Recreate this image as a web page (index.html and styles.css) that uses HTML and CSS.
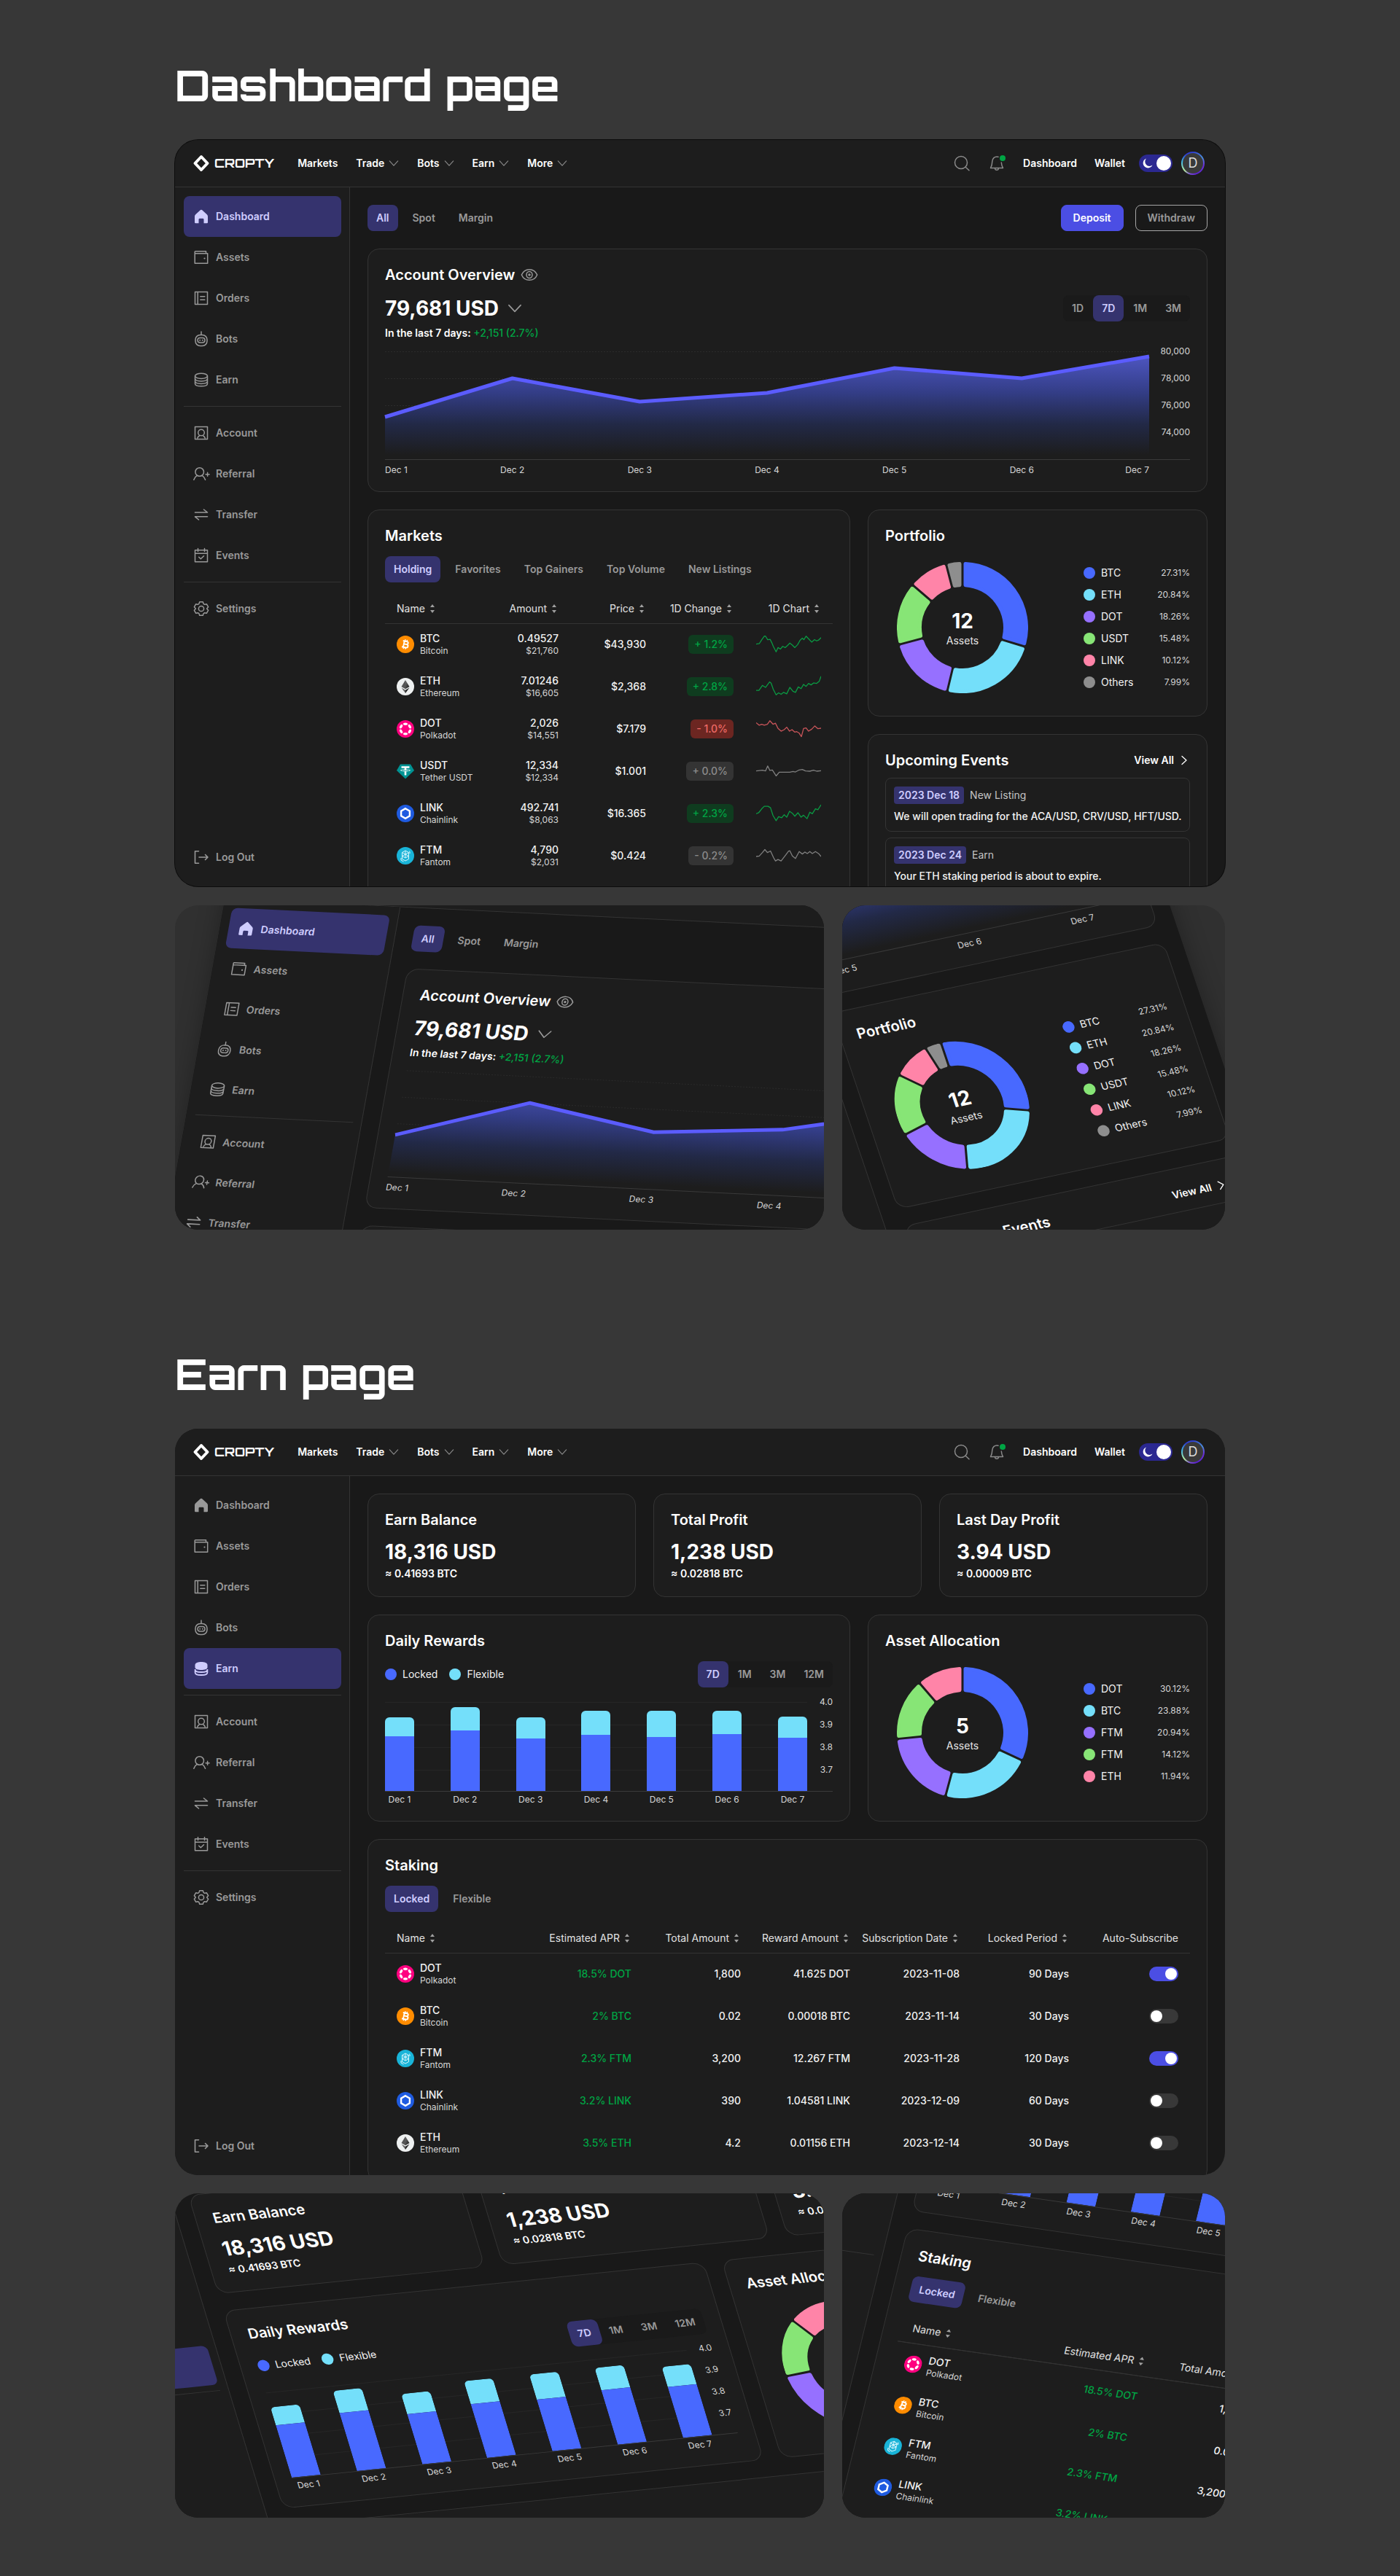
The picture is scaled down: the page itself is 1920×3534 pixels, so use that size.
FILE: index.html
```html
<!DOCTYPE html>
<html lang="en">
<head>
<meta charset="utf-8">
<meta name="viewport" content="width=device-width, initial-scale=1">
<title>Cropty</title>
<link rel="stylesheet" href="styles.css">
</head>
<body>
<svg class="sprite" aria-hidden="true">
  <defs>
    <linearGradient id="area-fill" gradientUnits="userSpaceOnUse" x1="0" y1="8" x2="0" y2="150">
      <stop offset="0" stop-color="#5159c8"/>
      <stop offset=".4" stop-color="#333d86"/>
      <stop offset=".7" stop-color="#222947"/>
      <stop offset="1" stop-color="#1d1d1d"/>
    </linearGradient>
    <linearGradient id="eth-fill" x1="0" y1="0" x2="1" y2="1">
      <stop offset="0" stop-color="#777"/><stop offset="1" stop-color="#111"/>
    </linearGradient>
  </defs>
  <symbol id="i-mark" viewBox="0 0 24 24"><path fill="none" stroke="#fff" stroke-width="4" stroke-linejoin="round" d="M12 3 20.500 12 12 21 3.500 12z"/></symbol>
  <symbol id="i-down" viewBox="0 0 16 16"><path fill="none" stroke="currentColor" stroke-width="1.300" stroke-linecap="round" stroke-linejoin="round" d="M1.500 4.500 8 11.500 14.500 4.500"/></symbol>
  <symbol id="i-right" viewBox="0 0 16 16"><path fill="none" stroke="currentColor" stroke-width="1.300" stroke-linecap="round" stroke-linejoin="round" d="M5 2.500 11 8 5 13.500"/></symbol>
  <symbol id="i-search" viewBox="0 0 24 24"><g fill="none" stroke="currentColor" stroke-width="1.500" stroke-linecap="round"><circle cx="11" cy="11" r="8.500"/><path d="m17.200 17.200 4.800 4.600"/></g></symbol>
  <symbol id="i-bell" viewBox="0 0 24 24"><g fill="none" stroke="currentColor" stroke-width="1.500" stroke-linecap="round" stroke-linejoin="round"><path d="M14 3.200C9 2 6 5.500 5.800 9.500 5.700 13 5.500 15 3.500 18.500h17c-1.500-2.500-2-4.500-2.200-7.500M9.500 19c.3 3 4.700 3 5 0"/></g></symbol>
  <symbol id="i-eye" viewBox="0 0 24 24"><g fill="none" stroke="currentColor" stroke-width="1.500"><path d="M1.300 12C5.500 2.200 18.500 2.200 22.700 12 18.500 21.800 5.500 21.800 1.300 12z"/><ellipse cx="12" cy="12" rx="4" ry="4.500"/><circle cx="12" cy="12" r="1"/></g></symbol>
  <symbol id="i-sort" viewBox="0 0 12 12"><path fill="currentColor" d="M6 0 9 4H3zM6 12 9 8H3z"/></symbol>
  <symbol id="i-moon" viewBox="0 0 14 14"><path fill="#fff" d="M5 .5A6.700 6.700 0 1 0 13.500 9.500 6.200 6.200 0 0 1 5 .5z"/></symbol>
  <symbol id="i-home" viewBox="0 0 24 24"><path fill="currentColor" d="M11 3.100a1.500 1.500 0 0 1 2 0l6.800 6.200q1.200 1 1.200 2.500V20q0 1.300-1.300 1.300h-4.200v-5.100q0-1.400-1.400-1.400H9.900q-1.400 0-1.400 1.400v5.100H4.300Q3 21.300 3 20v-8.200q0-1.500 1.200-2.500z"/></symbol>
  <symbol id="i-wallet" viewBox="0 0 24 24"><g fill="none" stroke="currentColor" stroke-width="1.500" stroke-linejoin="round"><path d="M3.200 6.800V4.500Q3.200 3.800 4 3.800h14.500v3M3.200 6.800h17.500v13.400H3.200z"/></g><circle cx="16.500" cy="13.500" r="1.100" fill="currentColor"/></symbol>
  <symbol id="i-orders" viewBox="0 0 24 24"><path fill="none" stroke="currentColor" stroke-width="1.500" stroke-linejoin="round" stroke-linecap="round" d="M3.500 3.500h17v17h-17zM7.200 3.500v17M10.800 9.800h6M10.800 14.200h6"/></symbol>
  <symbol id="i-bots" viewBox="0 0 24 24"><g fill="none" stroke="currentColor" stroke-width="1.500" stroke-linecap="round"><path d="M12 2v4"/><rect x="4" y="6.500" width="16" height="15" rx="6.500"/><rect x="7" y="10.500" width="10" height="6.500" rx="3.200"/></g><circle cx="10.200" cy="13.700" r="1" fill="currentColor"/><circle cx="13.800" cy="13.700" r="1" fill="currentColor"/></symbol>
  <symbol id="i-earn" viewBox="0 0 24 24"><g fill="none" stroke="currentColor" stroke-width="1.500"><ellipse cx="12" cy="6.800" rx="8.500" ry="3.600"/><path d="M3.500 6.800v10.400c0 4.800 17 4.800 17 0V6.800M3.500 10.300c0 4.800 17 4.800 17 0M3.500 13.800c0 4.800 17 4.800 17 0"/></g></symbol>
  <symbol id="i-earn-on" viewBox="0 0 24 24"><path fill="currentColor" d="M3.500 7c0-5.500 17-5.500 17 0v3.500c0 4.800-17 4.800-17 0z"/><path fill="none" stroke="currentColor" stroke-width="1.800" d="M3.600 13v4.400c0 4.800 16.800 4.800 16.800 0V13M3.600 13.400c0 4.800 16.800 4.800 16.800 0"/></symbol>
  <symbol id="i-account" viewBox="0 0 24 24"><g fill="none" stroke="currentColor" stroke-width="1.500" stroke-linejoin="round"><path d="M3.500 3.500h17v17h-17zM6.500 19.500q1.200-3.200 3.500-4M17.500 19.500q-1.200-3.200-3.500-4"/><circle cx="12" cy="11.500" r="4.300"/></g></symbol>
  <symbol id="i-referral" viewBox="0 0 24 24"><g fill="none" stroke="currentColor" stroke-width="1.500" stroke-linecap="round"><circle cx="9.700" cy="9.500" r="5.800"/><path d="M1.800 20.200q1-3.800 4.200-5.600M17.600 20.200q-1-3.800-4.200-5.600M20.600 10.200v5M18.100 12.700h5"/></g></symbol>
  <symbol id="i-transfer" viewBox="0 0 24 24"><path fill="none" stroke="currentColor" stroke-width="1.600" stroke-linecap="round" stroke-linejoin="round" d="M3.500 9h17L15.500 5M20.500 14.800h-17l5 4.200"/></symbol>
  <symbol id="i-events" viewBox="0 0 24 24"><path fill="none" stroke="currentColor" stroke-width="1.500" stroke-linecap="round" stroke-linejoin="round" d="M3.500 4.800h17v16h-17zM3.500 9.300h17M7.500 2.500v4M16.500 2.500v4M8.700 14.300l2.600 2.500 4.200-4"/></symbol>
  <symbol id="i-settings" viewBox="0 0 24 24"><g fill="none" stroke="currentColor" stroke-width="1.500" stroke-linejoin="round"><path d="M9.700 2.800h4.600l.8 2.600 1.600.9 2.600-.6 2.300 4-1.800 2v.6l1.800 2-2.300 4-2.600-.6-1.600.9-.8 2.600H9.700l-.8-2.600-1.600-.9-2.600.6-2.300-4 1.800-2v-.6l-1.800-2 2.300-4 2.600.6 1.600-.9z"/><circle cx="12" cy="12" r="3.600"/></g></symbol>
  <symbol id="i-logout" viewBox="0 0 24 24"><path fill="none" stroke="currentColor" stroke-width="1.600" stroke-linecap="round" stroke-linejoin="round" d="M8.500 3.800h-5v16.400h5M9 12h12M17.500 8.500 21 12l-3.500 3.500"/></symbol>
  <symbol id="c-btc" viewBox="0 0 24 24"><circle cx="12" cy="12" r="12" fill="#ff8c00"/><g fill="none" stroke="#fff" stroke-width="1.900" transform="rotate(12 12 12)"><path d="M7.800 7.800h5.400c2.800 0 2.800 4 0 4h-3M10 11.800h3.700c3 0 3 4.400 0 4.400H7.800M9.800 7.800v8.400"/><path stroke-width="1.500" d="M10.600 5.400v2M13.200 5.400v2M10.600 16.600v2M13.200 16.600v2"/></g></symbol>
  <symbol id="c-eth" viewBox="0 0 24 24"><circle cx="12" cy="12" r="12" fill="#eef0f0"/><path fill="#555" d="m12 3-5.500 9L12 15.300z"/><path fill="url(#eth-fill)" d="m12 3 5.500 9-5.500 3.300z"/><path fill="#666" d="M6.500 13.400 12 21v-4.300z"/><path fill="#222" d="M17.500 13.400 12 21v-4.300z"/></symbol>
  <symbol id="c-dot" viewBox="0 0 24 24"><circle cx="12" cy="12" r="12" fill="#ff0080"/><g fill="#fff"><ellipse cx="12" cy="5.200" rx="3" ry="1.700"/><ellipse cx="12" cy="18.800" rx="3" ry="1.700"/><ellipse cx="12" cy="5.200" rx="3" ry="1.700" transform="rotate(60 12 12)"/><ellipse cx="12" cy="5.200" rx="3" ry="1.700" transform="rotate(120 12 12)"/><ellipse cx="12" cy="5.200" rx="3" ry="1.700" transform="rotate(240 12 12)"/><ellipse cx="12" cy="5.200" rx="3" ry="1.700" transform="rotate(300 12 12)"/></g></symbol>
  <symbol id="c-usdt" viewBox="0 0 24 24"><path fill="#009393" d="M5 2.500h14l5 8.500L12 22.500 0 11z"/><path fill="#fff" d="M6.500 5.200h11v2.500h-4.200v1.500c3.200.2 5.600.8 5.600 1.600s-2.400 1.400-5.600 1.600v5h-2.600v-5c-3.200-.2-5.600-.8-5.600-1.600s2.400-1.400 5.600-1.600V7.700H6.500z"/><path fill="none" stroke="#009393" stroke-width=".8" d="M10.700 9.900c-5.500.5-5.500 1.500 1.300 1.600 6.800-.1 6.800-1.100 1.300-1.600"/></symbol>
  <symbol id="c-link" viewBox="0 0 24 24"><circle cx="12" cy="12" r="12" fill="#1f5be0"/><path fill="none" stroke="#fff" stroke-width="2.400" d="m12 5.200 5.900 3.400v6.800L12 18.800l-5.900-3.400V8.600z"/></symbol>
  <symbol id="c-ftm" viewBox="0 0 24 24"><circle cx="12" cy="12" r="12" fill="#19b4d8"/><path fill="none" stroke="#d9f6fd" stroke-width="1" d="m12 5 4.500 2.500v9L12 19l-4.500-2.500v-9zM7.500 7.500 16.500 12.500M16.500 7.500l-9 5M12 5v5M7.500 12.500 12 15l4.500-2.500M12 15v-5M6 15v3l3.500 2M18 9V6.500L17 5.800"/></symbol>
</svg>

<main class="page">
  <section class="showcase">
    <h2 class="showcase__title">Dashboard page</h2>
    <article class="window window--outlined" id="dashboard">
      <header class="topbar">
        <a class="brand" href="#"><svg class="brand__mark"><use href="#i-mark"/></svg>CROPTY</a>
        <nav class="menu">
          <a href="#">Markets</a>
          <a href="#">Trade<svg><use href="#i-down"/></svg></a>
          <a href="#">Bots<svg><use href="#i-down"/></svg></a>
          <a href="#">Earn<svg><use href="#i-down"/></svg></a>
          <a href="#">More<svg><use href="#i-down"/></svg></a>
        </nav>
        <div class="tools">
          <button class="icon-button" aria-label="Search"><svg><use href="#i-search"/></svg></button>
          <button class="icon-button icon-button--alert" aria-label="Notifications"><svg><use href="#i-bell"/></svg></button>
          <a href="#">Dashboard</a>
          <a href="#">Wallet</a>
          <label class="theme"><input type="checkbox" checked aria-label="Dark theme"><svg><use href="#i-moon"/></svg></label>
          <a class="avatar" href="#">D</a>
        </div>
      </header>
      <div class="body">
        <nav class="sidebar">
          <a class="sidebar__item is-active" href="#"><svg><use href="#i-home"/></svg>Dashboard</a>
          <a class="sidebar__item" href="#"><svg><use href="#i-wallet"/></svg>Assets</a>
          <a class="sidebar__item" href="#"><svg><use href="#i-orders"/></svg>Orders</a>
          <a class="sidebar__item" href="#"><svg><use href="#i-bots"/></svg>Bots</a>
          <a class="sidebar__item" href="#"><svg><use href="#i-earn"/></svg>Earn</a>
          <hr>
          <a class="sidebar__item" href="#"><svg><use href="#i-account"/></svg>Account</a>
          <a class="sidebar__item" href="#"><svg><use href="#i-referral"/></svg>Referral</a>
          <a class="sidebar__item" href="#"><svg><use href="#i-transfer"/></svg>Transfer</a>
          <a class="sidebar__item" href="#"><svg><use href="#i-events"/></svg>Events</a>
          <hr>
          <a class="sidebar__item" href="#"><svg><use href="#i-settings"/></svg>Settings</a>
          <a class="sidebar__item sidebar__item--last" href="#"><svg><use href="#i-logout"/></svg>Log Out</a>
        </nav>
        <div class="content">
          <div class="split">
            <div class="tabs"><button class="tab is-active">All</button><button class="tab">Spot</button><button class="tab">Margin</button></div>
            <div class="actions"><button class="button button--primary">Deposit</button><button class="button">Withdraw</button></div>
          </div>
          <section class="card">
            <h3 class="card__title">Account Overview <svg><use href="#i-eye"/></svg></h3>
            <div class="split split--below">
              <button class="amount amount--select">79,681 USD<svg><use href="#i-down"/></svg></button>
              <div class="range"><button class="tab">1D</button><button class="tab is-active">7D</button><button class="tab">1M</button><button class="tab">3M</button></div>
            </div>
            <p class="note note--change">In the last 7 days: <span class="up">+2,151 (2.7%)</span></p>
            <div class="chart chart--line">
              <div class="chart__row">
                <svg class="chart__plot" viewBox="0 0 1048 156" preserveAspectRatio="none">
                  <path class="gridline" d="M0 8.500H1048M0 45.500H1048M0 82.500H1048M0 119.500H1048"/>
                  <path fill="url(#area-fill)" d="M0 98 174.700 45 349.300 77 524 65 698.700 31 873.300 45 1048 15V151H0z"/>
                  <path class="trend" d="M0 98 174.700 45 349.300 77 524 65 698.700 31 873.300 45 1048 15"/>
                </svg>
                <div class="chart__y"><span>80,000</span><span>78,000</span><span>76,000</span><span>74,000</span></div>
              </div>
              <div class="chart__x"><span>Dec 1</span><span>Dec 2</span><span>Dec 3</span><span>Dec 4</span><span>Dec 5</span><span>Dec 6</span><span>Dec 7</span></div>
            </div>
          </section>
          <div class="columns">
            <section class="card">
              <h3 class="card__title">Markets</h3>
              <div class="tabs tabs--below"><button class="tab is-active">Holding</button><button class="tab">Favorites</button><button class="tab">Top Gainers</button><button class="tab">Top Volume</button><button class="tab">New Listings</button></div>
              <table class="table table--markets">
                <thead><tr>
                  <th><button>Name<svg><use href="#i-sort"/></svg></button></th>
                  <th><button>Amount<svg><use href="#i-sort"/></svg></button></th>
                  <th><button>Price<svg><use href="#i-sort"/></svg></button></th>
                  <th><button>1D Change<svg><use href="#i-sort"/></svg></button></th>
                  <th><button>1D Chart<svg><use href="#i-sort"/></svg></button></th>
                </tr></thead>
                <tbody>
                  <tr><td><div class="coin"><svg><use href="#c-btc"/></svg><div>BTC<small>Bitcoin</small></div></div></td><td>0.49527<small>$21,760</small></td><td>$43,930</td><td><span class="badge badge--up">+ 1.2%</span></td><td><svg class="spark spark--up" viewBox="0 0 208 94" preserveAspectRatio="none"><path d="M0 46 10 44 18 28 26 14 30 14 37 28 45 27 50 40 55 55 64 77 70 60 78 66 85 55 93 60 100 52 108 42 116 50 124 60 133 48 141 30 148 22 153 28 160 14 170 27 178 38 187 28 194 33 200 30 208 20"/></svg></td></tr>
                  <tr><td><div class="coin"><svg><use href="#c-eth"/></svg><div>ETH<small>Ethereum</small></div></div></td><td>7.01246<small>$16,605</small></td><td>$2,368</td><td><span class="badge badge--up">+ 2.8%</span></td><td><svg class="spark spark--up" viewBox="0 0 208 94" preserveAspectRatio="none"><path d="M0 62 9 62 20 42 30 50 43 28 48 33 55 58 64 80 72 72 80 78 88 70 98 76 108 50 118 66 126 70 135 48 144 55 152 38 160 46 168 34 176 40 184 32 194 34 202 26 208 5"/></svg></td></tr>
                  <tr><td><div class="coin"><svg><use href="#c-dot"/></svg><div>DOT<small>Polkadot</small></div></div></td><td>2,026<small>$14,551</small></td><td>$7.179</td><td><span class="badge badge--down">- 1.0%</span></td><td><svg class="spark spark--down" viewBox="0 0 208 94" preserveAspectRatio="none"><path d="M0 22 10 32 18 28 26 32 36 28 44 14 54 28 62 24 70 45 80 56 90 50 98 40 107 56 115 50 124 60 130 58 138 64 145 78 152 45 160 43 168 56 178 48 188 35 198 46 208 44"/></svg></td></tr>
                  <tr><td><div class="coin"><svg><use href="#c-usdt"/></svg><div>USDT<small>Tether USDT</small></div></div></td><td>12,334<small>$12,334</small></td><td>$1.001</td><td><span class="badge">+ 0.0%</span></td><td><svg class="spark" viewBox="0 0 208 94" preserveAspectRatio="none"><path d="M0 46 20 43 30 46 37 26 44 44 52 42 64 66 74 51 108 51 118 48 126 50 138 42 148 40 158 46 172 47 184 43 194 47 208 45"/></svg></td></tr>
                  <tr><td><div class="coin"><svg><use href="#c-link"/></svg><div>LINK<small>Chainlink</small></div></div></td><td>492.741<small>$8,063</small></td><td>$16.365</td><td><span class="badge badge--up">+ 2.3%</span></td><td><svg class="spark spark--up" viewBox="0 0 208 94" preserveAspectRatio="none"><path d="M0 48 8 44 18 28 26 18 38 18 46 24 54 55 64 76 72 60 82 64 90 52 98 62 107 38 116 46 124 58 134 44 144 62 152 54 163 68 172 42 180 48 190 28 198 32 208 12"/></svg></td></tr>
                  <tr><td><div class="coin"><svg><use href="#c-ftm"/></svg><div>FTM<small>Fantom</small></div></div></td><td>4,790<small>$2,031</small></td><td>$0.424</td><td><span class="badge">- 0.2%</span></td><td><svg class="spark" viewBox="0 0 208 94" preserveAspectRatio="none"><path d="M0 50 10 48 20 34 28 22 36 34 46 28 56 55 62 68 70 62 80 68 94 45 104 28 108 27 116 48 126 58 138 30 148 40 156 32 164 38 172 30 180 38 190 30 200 38 208 50"/></svg></td></tr>
                </tbody>
              </table>
            </section>
            <div class="stack">
              <section class="card">
                <h3 class="card__title">Portfolio</h3>
                <div class="share">
                  <div class="donut"><svg viewBox="-90 -90 180 180" data-stops="0 107 193.500 255 310.500 345.500 360"></svg><div class="donut__label"><strong>12</strong>Assets</div></div>
                  <ul class="legend">
                    <li>BTC<span>27.31%</span></li><li>ETH<span>20.84%</span></li><li>DOT<span>18.26%</span></li><li>USDT<span>15.48%</span></li><li>LINK<span>10.12%</span></li><li>Others<span>7.99%</span></li>
                  </ul>
                </div>
              </section>
              <section class="card">
                <div class="split"><h3 class="card__title">Upcoming Events</h3><a class="more" href="#">View All<svg><use href="#i-right"/></svg></a></div>
                <ul class="events">
                  <li><time datetime="2023-12-18">2023 Dec 18</time><span class="events__kind">New Listing</span><p>We will open trading for the ACA/USD, CRV/USD, HFT/USD.</p></li>
                  <li><time datetime="2023-12-24">2023 Dec 24</time><span class="events__kind">Earn</span><p>Your ETH staking period is about to expire.</p></li>
                </ul>
              </section>
            </div>
          </div>
        </div>
      </div>
    </article>
    <div class="closeups">
      <div class="closeup closeup--overview" data-window="dashboard"></div>
      <div class="closeup closeup--portfolio" data-window="dashboard"></div>
    </div>
  </section>

  <section class="showcase">
    <h2 class="showcase__title">Earn page</h2>
    <article class="window" id="earn">
      <header class="topbar">
        <a class="brand" href="#"><svg class="brand__mark"><use href="#i-mark"/></svg>CROPTY</a>
        <nav class="menu">
          <a href="#">Markets</a>
          <a href="#">Trade<svg><use href="#i-down"/></svg></a>
          <a href="#">Bots<svg><use href="#i-down"/></svg></a>
          <a href="#">Earn<svg><use href="#i-down"/></svg></a>
          <a href="#">More<svg><use href="#i-down"/></svg></a>
        </nav>
        <div class="tools">
          <button class="icon-button" aria-label="Search"><svg><use href="#i-search"/></svg></button>
          <button class="icon-button icon-button--alert" aria-label="Notifications"><svg><use href="#i-bell"/></svg></button>
          <a href="#">Dashboard</a>
          <a href="#">Wallet</a>
          <label class="theme"><input type="checkbox" checked aria-label="Dark theme"><svg><use href="#i-moon"/></svg></label>
          <a class="avatar" href="#">D</a>
        </div>
      </header>
      <div class="body">
        <nav class="sidebar">
          <a class="sidebar__item" href="#"><svg><use href="#i-home"/></svg>Dashboard</a>
          <a class="sidebar__item" href="#"><svg><use href="#i-wallet"/></svg>Assets</a>
          <a class="sidebar__item" href="#"><svg><use href="#i-orders"/></svg>Orders</a>
          <a class="sidebar__item" href="#"><svg><use href="#i-bots"/></svg>Bots</a>
          <a class="sidebar__item is-active" href="#"><svg><use href="#i-earn-on"/></svg>Earn</a>
          <hr>
          <a class="sidebar__item" href="#"><svg><use href="#i-account"/></svg>Account</a>
          <a class="sidebar__item" href="#"><svg><use href="#i-referral"/></svg>Referral</a>
          <a class="sidebar__item" href="#"><svg><use href="#i-transfer"/></svg>Transfer</a>
          <a class="sidebar__item" href="#"><svg><use href="#i-events"/></svg>Events</a>
          <hr>
          <a class="sidebar__item" href="#"><svg><use href="#i-settings"/></svg>Settings</a>
          <a class="sidebar__item sidebar__item--last" href="#"><svg><use href="#i-logout"/></svg>Log Out</a>
        </nav>
        <div class="content">
          <div class="stats">
            <section class="card"><h3 class="card__title">Earn Balance</h3><p class="amount">18,316 USD</p><p class="note">≈ 0.41693 BTC</p></section>
            <section class="card"><h3 class="card__title">Total Profit</h3><p class="amount">1,238 USD</p><p class="note">≈ 0.02818 BTC</p></section>
            <section class="card"><h3 class="card__title">Last Day Profit</h3><p class="amount">3.94 USD</p><p class="note">≈ 0.00009 BTC</p></section>
          </div>
          <div class="columns">
            <section class="card">
              <h3 class="card__title">Daily Rewards</h3>
              <div class="split split--below">
                <ul class="keys"><li>Locked</li><li>Flexible</li></ul>
                <div class="range"><button class="tab is-active">7D</button><button class="tab">1M</button><button class="tab">3M</button><button class="tab">12M</button></div>
              </div>
              <div class="chart chart--bars">
                <div class="chart__row">
                  <div class="bars">
                    <div class="bar"><i style="height:26px"></i><b style="height:75px"></b></div>
                    <div class="bar"><i style="height:32px"></i><b style="height:83px"></b></div>
                    <div class="bar"><i style="height:29px"></i><b style="height:72px"></b></div>
                    <div class="bar"><i style="height:33px"></i><b style="height:77px"></b></div>
                    <div class="bar"><i style="height:36px"></i><b style="height:74px"></b></div>
                    <div class="bar"><i style="height:32px"></i><b style="height:78px"></b></div>
                    <div class="bar"><i style="height:29px"></i><b style="height:73px"></b></div>
                  </div>
                  <div class="chart__y"><span>4.0</span><span>3.9</span><span>3.8</span><span>3.7</span></div>
                </div>
                <div class="chart__x"><span>Dec 1</span><span>Dec 2</span><span>Dec 3</span><span>Dec 4</span><span>Dec 5</span><span>Dec 6</span><span>Dec 7</span></div>
              </div>
            </section>
            <section class="card">
              <h3 class="card__title">Asset Allocation</h3>
              <div class="share">
                <div class="donut"><svg viewBox="-90 -90 180 180" data-stops="0 115 195 264.500 319 360"></svg><div class="donut__label"><strong>5</strong>Assets</div></div>
                <ul class="legend">
                  <li>DOT<span>30.12%</span></li><li>BTC<span>23.88%</span></li><li>FTM<span>20.94%</span></li><li>FTM<span>14.12%</span></li><li>ETH<span>11.94%</span></li>
                </ul>
              </div>
            </section>
          </div>
          <section class="card">
            <h3 class="card__title">Staking</h3>
            <div class="tabs tabs--below"><button class="tab is-active">Locked</button><button class="tab">Flexible</button></div>
            <table class="table table--staking">
              <thead><tr>
                <th><button>Name<svg><use href="#i-sort"/></svg></button></th>
                <th><button>Estimated APR<svg><use href="#i-sort"/></svg></button></th>
                <th><button>Total Amount<svg><use href="#i-sort"/></svg></button></th>
                <th><button>Reward Amount<svg><use href="#i-sort"/></svg></button></th>
                <th><button>Subscription Date<svg><use href="#i-sort"/></svg></button></th>
                <th><button>Locked Period<svg><use href="#i-sort"/></svg></button></th>
                <th>Auto-Subscribe</th>
              </tr></thead>
              <tbody>
                <tr><td><div class="coin"><svg><use href="#c-dot"/></svg><div>DOT<small>Polkadot</small></div></div></td><td class="up">18.5% DOT</td><td>1,800</td><td>41.625 DOT</td><td>2023-11-08</td><td>90 Days</td><td><input class="switch" type="checkbox" aria-label="Auto-Subscribe DOT" checked></td></tr>
                <tr><td><div class="coin"><svg><use href="#c-btc"/></svg><div>BTC<small>Bitcoin</small></div></div></td><td class="up">2% BTC</td><td>0.02</td><td>0.00018 BTC</td><td>2023-11-14</td><td>30 Days</td><td><input class="switch" type="checkbox" aria-label="Auto-Subscribe BTC"></td></tr>
                <tr><td><div class="coin"><svg><use href="#c-ftm"/></svg><div>FTM<small>Fantom</small></div></div></td><td class="up">2.3% FTM</td><td>3,200</td><td>12.267 FTM</td><td>2023-11-28</td><td>120 Days</td><td><input class="switch" type="checkbox" aria-label="Auto-Subscribe FTM" checked></td></tr>
                <tr><td><div class="coin"><svg><use href="#c-link"/></svg><div>LINK<small>Chainlink</small></div></div></td><td class="up">3.2% LINK</td><td>390</td><td>1.04581 LINK</td><td>2023-12-09</td><td>60 Days</td><td><input class="switch" type="checkbox" aria-label="Auto-Subscribe LINK"></td></tr>
                <tr><td><div class="coin"><svg><use href="#c-eth"/></svg><div>ETH<small>Ethereum</small></div></div></td><td class="up">3.5% ETH</td><td>4.2</td><td>0.01156 ETH</td><td>2023-12-14</td><td>30 Days</td><td><input class="switch" type="checkbox" aria-label="Auto-Subscribe ETH"></td></tr>
              </tbody>
            </table>
          </section>
        </div>
      </div>
    </article>
    <div class="closeups">
      <div class="closeup closeup--rewards" data-window="earn"></div>
      <div class="closeup closeup--staking" data-window="earn"></div>
    </div>
  </section>
</main>
<script src="app.js"></script>
</body>
</html>
```
FILE: styles.css
```css
:root {
  --bg: #373737;
  --window: #191919;
  --panel: #1d1d1d;
  --line: #343434;
  --accent-dim: #35336e;
  --accent-text: #cfcdff;
  --muted: #999;
  --green: #00a544;
}

* { box-sizing: border-box; }

body, h2, h3, p, ul { margin: 0; padding: 0; }

body {
  background: var(--bg);
  color: #f2f2f2;
  font-family: Inter, "Liberation Sans", sans-serif;
  font-size: 14px;
  line-height: 18px;
}

ul { list-style: none; }
a { color: inherit; text-decoration: none; }
button { border: 0; background: none; color: inherit; font: inherit; padding: 0; white-space: nowrap; }
svg { display: block; flex: none; }
.sprite { position: absolute; width: 0; height: 0; }

/* Presentation page */
.page { max-width: 1440px; margin: 0 auto; padding: 81px 0 80px; display: flex; flex-direction: column; gap: 162px; }
.showcase { display: flex; flex-direction: column; }
.showcase__title {
  margin-bottom: 39px;
  color: #fff;
  font-family: Orbitron, "DejaVu Sans", sans-serif;
  font-size: 58px;
  font-weight: 700;
  line-height: 72px;
}

.window {
  display: flex;
  flex-direction: column;
  height: 1024px;
  overflow: hidden;
  border-radius: 32px;
  background: var(--window);
}
.window--outlined { box-shadow: 0 0 0 1px #0c0c0c; margin-bottom: 1px; }

.closeups { display: grid; grid-template-columns: 890fr 525fr; gap: 25px; margin-top: 25px; }
.closeup { position: relative; height: 445px; overflow: hidden; border-radius: 32px; background: #303030; }
.closeup .window {
  position: absolute;
  top: 0;
  left: 0;
  width: 1440px;
  margin: 0;
  box-shadow: 0 0 32px rgba(0, 0, 0, .3);
  transform-origin: 0 0;
}
.closeup--overview .window { transform: matrix(1.003, .0485, -.176, .984, 80, -73); }
.closeup--portfolio .window { transform: matrix(.978, -.208, .32, .949, -1106, -136); }
.closeup--rewards .window { transform: matrix(.996, -.101, .29, .956, -271, -56); }
.closeup--staking .window { transform: matrix(.992, .143, -.237, .971, -39, -537); }
.closeup .is-offstage { visibility: hidden; }

/* Top bar */
.topbar {
  display: flex;
  align-items: center;
  flex: none;
  height: 65px;
  padding: 0 28px 0 24px;
  border-bottom: 1px solid var(--line);
  background: var(--panel);
  color: #fff;
  font-weight: 600;
}
.brand { display: flex; align-items: center; gap: 6px; margin-right: 32px; font-family: Orbitron, "DejaVu Sans", sans-serif; font-size: 17px; font-weight: 700; }
.brand__mark { width: 24px; height: 24px; }
.menu { display: flex; gap: 25px; }
.menu a { display: flex; align-items: center; gap: 6px; }
.menu svg { width: 14px; height: 14px; color: #8a8a8a; }
.tools { display: flex; align-items: center; gap: 24px; margin-left: auto; }
.icon-button { position: relative; width: 24px; height: 24px; color: #8a8a8a; }
.icon-button svg { width: 24px; height: 24px; }
.icon-button--alert::after { content: ""; position: absolute; top: 1px; right: 0; width: 8px; height: 8px; border-radius: 50%; background: var(--green); }
.theme { position: relative; display: block; width: 46px; height: 24px; margin-left: -5px; }
.theme input { appearance: none; display: block; width: 46px; height: 24px; margin: 0; padding: 2px; border-radius: 12px; background: #2b2891; }
.theme input::before { content: ""; display: block; width: 20px; height: 20px; margin-left: auto; border-radius: 50%; background: #fff; }
.theme svg { position: absolute; top: 5px; left: 5px; width: 14px; height: 14px; }
.avatar {
  display: grid;
  place-items: center;
  width: 32px;
  height: 32px;
  margin-left: -12px;
  border: 2px solid transparent;
  border-radius: 50%;
  background: linear-gradient(#3a3a3a, #3a3a3a) padding-box, conic-gradient(#2f3fd0, #4a8fe0 60deg, #6a30d8 100deg, #5a20d0 160deg, #7a4bd8 195deg, #b9f0a0 230deg, #3fb8e8 280deg, #2f3fd0 320deg) border-box;
  color: #ddd;
  font-size: 18px;
  font-weight: 400;
}

/* Sidebar */
.body { display: flex; flex: 1; min-height: 0; }
.sidebar { display: flex; flex-direction: column; flex: none; width: 240px; padding: 12px 11px 12px 12px; border-right: 1px solid var(--line); background: var(--panel); }
.sidebar hr { width: 100%; margin: 8px 0; border: 0; border-top: 1px solid var(--line); }
.sidebar__item { display: flex; align-items: center; gap: 8px; flex: none; height: 56px; padding: 0 12px; border-radius: 8px; color: var(--muted); font-weight: 600; }
.sidebar__item svg { width: 24px; height: 24px; }
.sidebar__item--last { margin-top: auto; }
.sidebar__item.is-active { background: var(--accent-dim); color: var(--accent-text); }

/* Layout of the main area */
.content { display: flex; flex-direction: column; flex: 1; gap: 24px; min-width: 0; padding: 24px; overflow: hidden; }
.content > * { flex: none; }
.columns { display: grid; grid-template-columns: minmax(0, 1fr) 466px; gap: 24px; }
.stack { display: flex; flex-direction: column; gap: 24px; }
.stats { display: grid; grid-template-columns: repeat(3, 1fr); gap: 24px; }
.split { display: flex; align-items: center; justify-content: space-between; }
.split--below { margin-top: 16px; height: 36px; }

.card { min-width: 0; padding: 23px; border: 1px solid var(--line); border-radius: 16px; background: var(--panel); }
.card__title { display: flex; align-items: center; gap: 8px; color: #fff; font-size: 20px; font-weight: 600; line-height: 24px; }
.card__title svg { width: 24px; height: 24px; color: var(--muted); }

.tabs { display: flex; gap: 8px; }
.tabs--below { margin-top: 16px; }
.tab { height: 36px; padding: 0 12px; border-radius: 8px; color: var(--muted); font-weight: 600; }
.tab.is-active { background: var(--accent-dim); color: var(--accent-text); }
.range { display: flex; gap: 1px; border-radius: 8px; background: #1a1a1a; }

.actions { display: flex; gap: 16px; }
.button { height: 36px; padding: 0 16px; border: 1px solid #a6a6a6; border-radius: 8px; color: var(--muted); font-weight: 600; }
.button--primary { border-color: #4b4ee4; background: #4b4ee4; color: #fff; }

.amount { color: #fff; font-size: 28px; font-weight: 700; line-height: 32px; }
.stats .amount { margin-top: 16px; }
.amount--select { display: flex; align-items: center; gap: 12px; }
.amount--select svg { width: 20px; height: 20px; color: var(--muted); }
.note { margin-top: 6px; color: #fff; font-weight: 600; line-height: 16px; }
.note--change { margin-top: 8px; }
.up { color: var(--green); }
.note .up { font-weight: 500; }

/* Charts */
.chart { margin-top: 12px; color: #d6d6d6; font-size: 12px; }
.chart--line { margin-top: 9px; }
.chart__row { display: flex; border-bottom: 1px solid #3a3a3a; }
.chart__plot { flex: 1; min-width: 0; height: 156px; overflow: visible; }
.gridline { stroke: #2b2b2b; stroke-dasharray: 2 2; fill: none; }
.trend { fill: none; stroke: #5b5cff; stroke-width: 5; stroke-linejoin: round; vector-effect: non-scaling-stroke; }
.chart__y { display: flex; flex-direction: column; flex: none; line-height: 16px; text-align: right; }
.chart__x { line-height: 12px; text-align: center; }
.chart--line .chart__y { gap: 21px; width: 56px; }
.chart--line .chart__x { display: grid; grid-template-columns: 1fr repeat(5, 2fr) 1fr; margin: 8px 56px 0 0; }
.chart--line .chart__x :first-child { text-align: left; }
.chart--line .chart__x :last-child { text-align: right; }
.chart--bars .chart__y { gap: 15px; width: 35px; }
.chart--bars .chart__x { display: flex; justify-content: space-between; margin: 5px 35px 0 0; }
.chart--bars .chart__x span { width: 40px; }
.bars {
  display: flex;
  align-items: flex-end;
  justify-content: space-between;
  flex: 1;
  height: 130px;
  background: linear-gradient(#262626 1px, transparent 1px) 0 8px / 100% 31px;
}
.bar { width: 40px; overflow: hidden; border-radius: 6px 6px 0 0; }
.bar i, .bar b { display: block; }
.bar i { background: #74dffa; }
.bar b { background: #4869ff; }

.keys { display: flex; gap: 16px; }
.keys li { display: flex; align-items: center; gap: 8px; }
.keys li::before, .legend li::before { content: ""; width: 16px; height: 16px; border-radius: 50%; background: var(--key, #4869ff); }

.keys li:nth-child(2), .legend li:nth-child(2) { --key: #74dffa; }
.legend li:nth-child(3) { --key: #9670ff; }
.legend li:nth-child(4) { --key: #87e576; }
.legend li:nth-child(5) { --key: #ff84a8; }
.legend li:nth-child(6) { --key: #8e8e8e; }

.share { display: flex; align-items: center; justify-content: space-between; padding: 24px 0 8px 16px; }
.donut { display: grid; width: 180px; height: 180px; }
.donut > * { grid-area: 1 / 1; }
.donut svg { width: 180px; height: 180px; }
.donut path { stroke-width: 5; stroke-linejoin: round; }
.donut__label { place-self: center; padding-top: 2px; text-align: center; color: #e6e6e6; }
.donut__label strong { display: block; margin-bottom: 2px; color: #fff; font-size: 28px; font-weight: 700; line-height: 32px; }
.legend { display: flex; flex-direction: column; gap: 10px; width: 146px; line-height: 20px; }
.legend li { display: flex; align-items: center; gap: 8px; }
.legend span { margin-left: auto; color: #d6d6d6; font-size: 12px; }

/* Tables */
.table { width: 100%; margin-top: 16px; border-collapse: collapse; table-layout: fixed; font-weight: 500; }
.table th, .table td { padding: 0 16px 0 0; text-align: right; white-space: nowrap; }
.table th { height: 40px; border-bottom: 1px solid var(--line); font-weight: 400; color: #e2e2e2; }
.table td { height: 58px; }
.table th:first-child, .table td:first-child { padding-left: 16px; text-align: left; }
.table th button { display: inline-flex; align-items: center; gap: 4px; }
.table th svg { width: 12px; height: 12px; color: #a0a0a0; }
.table small { display: block; color: #d6d6d6; font-size: 12px; font-weight: 400; line-height: 16px; }
.table--markets th:not(:first-child) { width: 120px; }
.table--staking th:not(:first-child) { width: 150px; }
.coin { display: flex; align-items: center; gap: 8px; }
.coin svg { width: 24px; height: 24px; }
.badge { display: inline-block; padding: 4px 8px; border-radius: 6px; background: #343434; color: #8c8c8c; }
.badge--up { background: #0f3c1f; color: var(--green); }
.badge--down { background: #6c2621; color: #ee6a66; }
.spark { width: 89px; height: 32px; margin-left: auto; color: #808080; }
.spark path { fill: none; stroke: currentColor; stroke-width: 1.300; stroke-linejoin: round; vector-effect: non-scaling-stroke; }
.spark--up { color: #0a9a43; }
.spark--down { color: #c9555a; }

.switch { appearance: none; display: block; width: 40px; height: 20px; margin: 0 0 0 auto; padding: 2px; border-radius: 10px; background: #383838; }
.switch::before { content: ""; display: block; width: 16px; height: 16px; border-radius: 50%; background: #fff; }
.switch:checked { background: #4b4ee4; }
.switch:checked::before { margin-left: auto; }

/* Events */
.more { display: flex; align-items: center; gap: 6px; color: #fff; font-weight: 600; }
.more svg { width: 16px; height: 16px; }
.events { display: flex; flex-direction: column; gap: 8px; margin-top: 12px; }
.events li { display: flex; flex-wrap: wrap; align-items: center; gap: 8px; padding: 11px; border: 1px solid var(--line); border-radius: 8px; }
.events time { padding: 0 6px; border-radius: 4px; background: var(--accent-dim); color: var(--accent-text); font-weight: 600; line-height: 24px; }
.events__kind { color: #c4c4c4; }
.events p { width: 100%; font-weight: 500; white-space: nowrap; }
```
FILE: app.js
```js
const palette = ['#4869ff', '#74dffa', '#9670ff', '#87e576', '#ff84a8', '#8e8e8e'];

// Ring sector whose straight sides keep the same distance from its neighbours.
function sector(from, to) {
  const outer = 87.5, inner = 58.5, inset = 4;
  const point = (radius, degrees, side) => {
    const angle = degrees * Math.PI / 180 + side * Math.asin(inset / radius);
    return `${(radius * Math.sin(angle)).toFixed(2)} ${(-radius * Math.cos(angle)).toFixed(2)}`;
  };
  const large = to - from > 180 ? 1 : 0;
  return `M${point(outer, from, 1)}A${outer} ${outer} 0 ${large} 1 ${point(outer, to, -1)}` +
    `L${point(inner, to, -1)}A${inner} ${inner} 0 ${large} 0 ${point(inner, from, 1)}z`;
}

document.querySelectorAll('[data-stops]').forEach((svg) => {
  const stops = svg.dataset.stops.split(' ').map(Number);
  stops.slice(1).forEach((stop, i) => {
    const path = document.createElementNS('http://www.w3.org/2000/svg', 'path');
    path.setAttribute('d', sector(stops[i], stop));
    path.setAttribute('fill', palette[i]);
    path.setAttribute('stroke', palette[i]);
    svg.append(path);
  });
});

// Each close-up shows a tilted copy of one of the windows.
document.querySelectorAll('.closeup').forEach((closeup) => {
  const copy = document.getElementById(closeup.dataset.window).cloneNode(true);
  copy.removeAttribute('id');
  copy.inert = true;
  closeup.append(copy);

  // Parts that fall outside the frame need no painting.
  const frame = closeup.getBoundingClientRect();
  copy.querySelectorAll('a, button, h3, p, li, time, span, small, strong, td, th, label, .coin, .donut').forEach((part) => {
    const box = part.getBoundingClientRect();
    const outside = box.right < frame.left || box.left > frame.right || box.bottom < frame.top || box.top > frame.bottom;
    part.classList.toggle('is-offstage', outside);
  });
});
```
